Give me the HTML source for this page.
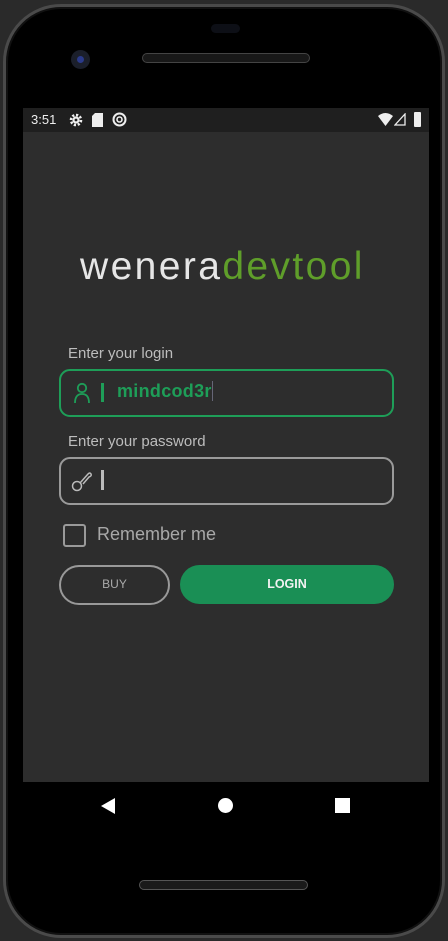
<!DOCTYPE html>
<html><head><meta charset="utf-8"><style>
*{margin:0;padding:0;box-sizing:border-box}
body{width:448px;height:941px;background:#2a2a2a;position:relative;overflow:hidden;font-family:"Liberation Sans",sans-serif}
.phone{position:absolute;left:3px;top:4px;width:442px;height:934px;background:#000;border-radius:58px;border:3px solid #4a4a4a;box-shadow:inset 0 0 0 2px #111}
.screen{position:absolute;left:23px;top:108px;width:406px;height:674px;background:#2d2d2d}
.status{position:absolute;left:23px;top:108px;width:406px;height:24px;background:#1f1f1f;color:#eee;font-size:13px}
.abs{position:absolute}
.box{position:absolute;left:59px;width:335px;height:48px;border-radius:11px;border:2.5px solid}
</style></head><body>
<div class="phone"></div>
<div class="abs" style="left:211px;top:24px;width:29px;height:9px;border-radius:5px;background:#0d0f16"></div>
<div class="abs" style="left:71px;top:50px;width:19px;height:19px;border-radius:50%;background:#1b1f2b"><div class="abs" style="left:6px;top:6px;width:7px;height:7px;border-radius:50%;background:#2a3a8a"></div></div>
<div class="abs" style="left:142px;top:53px;width:168px;height:10px;border-radius:5px;border:1px solid #444;background:#181818"></div>
<div class="screen"></div>
<div class="status">
<span class="abs" style="left:8px;top:4px">3:51</span>
<svg class="abs" style="left:46px;top:5px" width="14" height="14" viewBox="0 0 14 14"><circle cx="7" cy="7" r="5" fill="none" stroke="#eee" stroke-width="2.6" stroke-dasharray="2.2 1.7"/><circle cx="7" cy="7" r="3.6" fill="#eee"/><circle cx="7" cy="7" r="1.4" fill="#1f1f1f"/></svg>
<svg class="abs" style="left:69px;top:5px" width="11" height="14"><path d="M3 0H11V14H0V3Z" fill="#eee"/></svg>
<svg class="abs" style="left:89px;top:4px" width="15" height="15"><circle cx="7.5" cy="7.5" r="6" fill="none" stroke="#eee" stroke-width="2"/><circle cx="7.5" cy="7.5" r="2.5" fill="none" stroke="#eee" stroke-width="1.6"/></svg>
<svg class="abs" style="left:355px;top:5px" width="15" height="13"><path d="M0 3Q7.5 -3 15 3L7.5 13Z" fill="#eee"/></svg>
<svg class="abs" style="left:371px;top:5px" width="12" height="13"><path d="M11 1V12H1Z" fill="none" stroke="#eee" stroke-width="1.3"/></svg>
<div class="abs" style="left:391px;top:4px;width:7px;height:15px;background:#eee;border-radius:1px"></div>
</div>
<div class="abs" style="left:80px;top:245px;font-size:39px;letter-spacing:2.4px;color:#e6e6e6">wenera<span style="color:#5f9e2a">devtool</span></div>
<div class="abs" style="left:68px;top:345px;font-size:15px;color:#bdbdbd">Enter your login</div>
<div class="box" style="top:369px;border-color:#1e9e58"></div>
<svg class="abs" style="left:73px;top:382px" width="18" height="22"><circle cx="9" cy="6" r="4.2" fill="none" stroke="#1e9e58" stroke-width="1.8"/><path d="M2 21Q2 12 9 12Q16 12 16 21" fill="none" stroke="#1e9e58" stroke-width="1.8"/></svg>
<div class="abs" style="left:101px;top:383px;width:3px;height:19px;background:#1e9e58"></div>
<div class="abs" style="left:117px;top:381px;font-size:18px;color:#1e9e58;font-weight:bold;letter-spacing:0.3px">mindcod3r<span style="display:inline-block;width:1px;height:20px;background:#667;vertical-align:-4px"></span></div>
<div class="abs" style="left:68px;top:433px;font-size:15px;color:#bdbdbd">Enter your password</div>
<div class="box" style="top:457px;border-color:#9a9a9a"></div>
<svg class="abs" style="left:71px;top:469px" width="22" height="24"><circle cx="6" cy="17" r="4.5" fill="none" stroke="#bbb" stroke-width="1.5"/><path d="M9 14L17 5Q19 3 20 5Q21 7 18 8L12 15" fill="none" stroke="#bbb" stroke-width="1.5"/></svg>
<div class="abs" style="left:101px;top:470px;width:3px;height:20px;background:#bbb"></div>
<div class="abs" style="left:63px;top:524px;width:23px;height:23px;border:2px solid #999;border-radius:3px"></div>
<div class="abs" style="left:97px;top:524px;font-size:18px;color:#a8a8a8">Remember me</div>
<div class="abs" style="left:59px;top:565px;width:111px;height:40px;border:2.5px solid #999;border-radius:20px;color:#aaa;font-size:12px;text-align:center;line-height:35px">BUY</div>
<div class="abs" style="left:180px;top:565px;width:214px;height:39px;background:#1a8f55;border-radius:20px;color:#f2f2f2;font-size:12.5px;font-weight:bold;text-align:center;line-height:39px">LOGIN</div>
<svg class="abs" style="left:100px;top:797px" width="16" height="18"><path d="M15 1V17L1 9Z" fill="#fff"/></svg>
<div class="abs" style="left:218px;top:798px;width:15px;height:15px;border-radius:50%;background:#fff"></div>
<div class="abs" style="left:335px;top:798px;width:15px;height:15px;background:#fff"></div>
<div class="abs" style="left:139px;top:880px;width:169px;height:10px;border-radius:5px;border:1px solid #555;background:#1a1a1a"></div>
</body></html>
